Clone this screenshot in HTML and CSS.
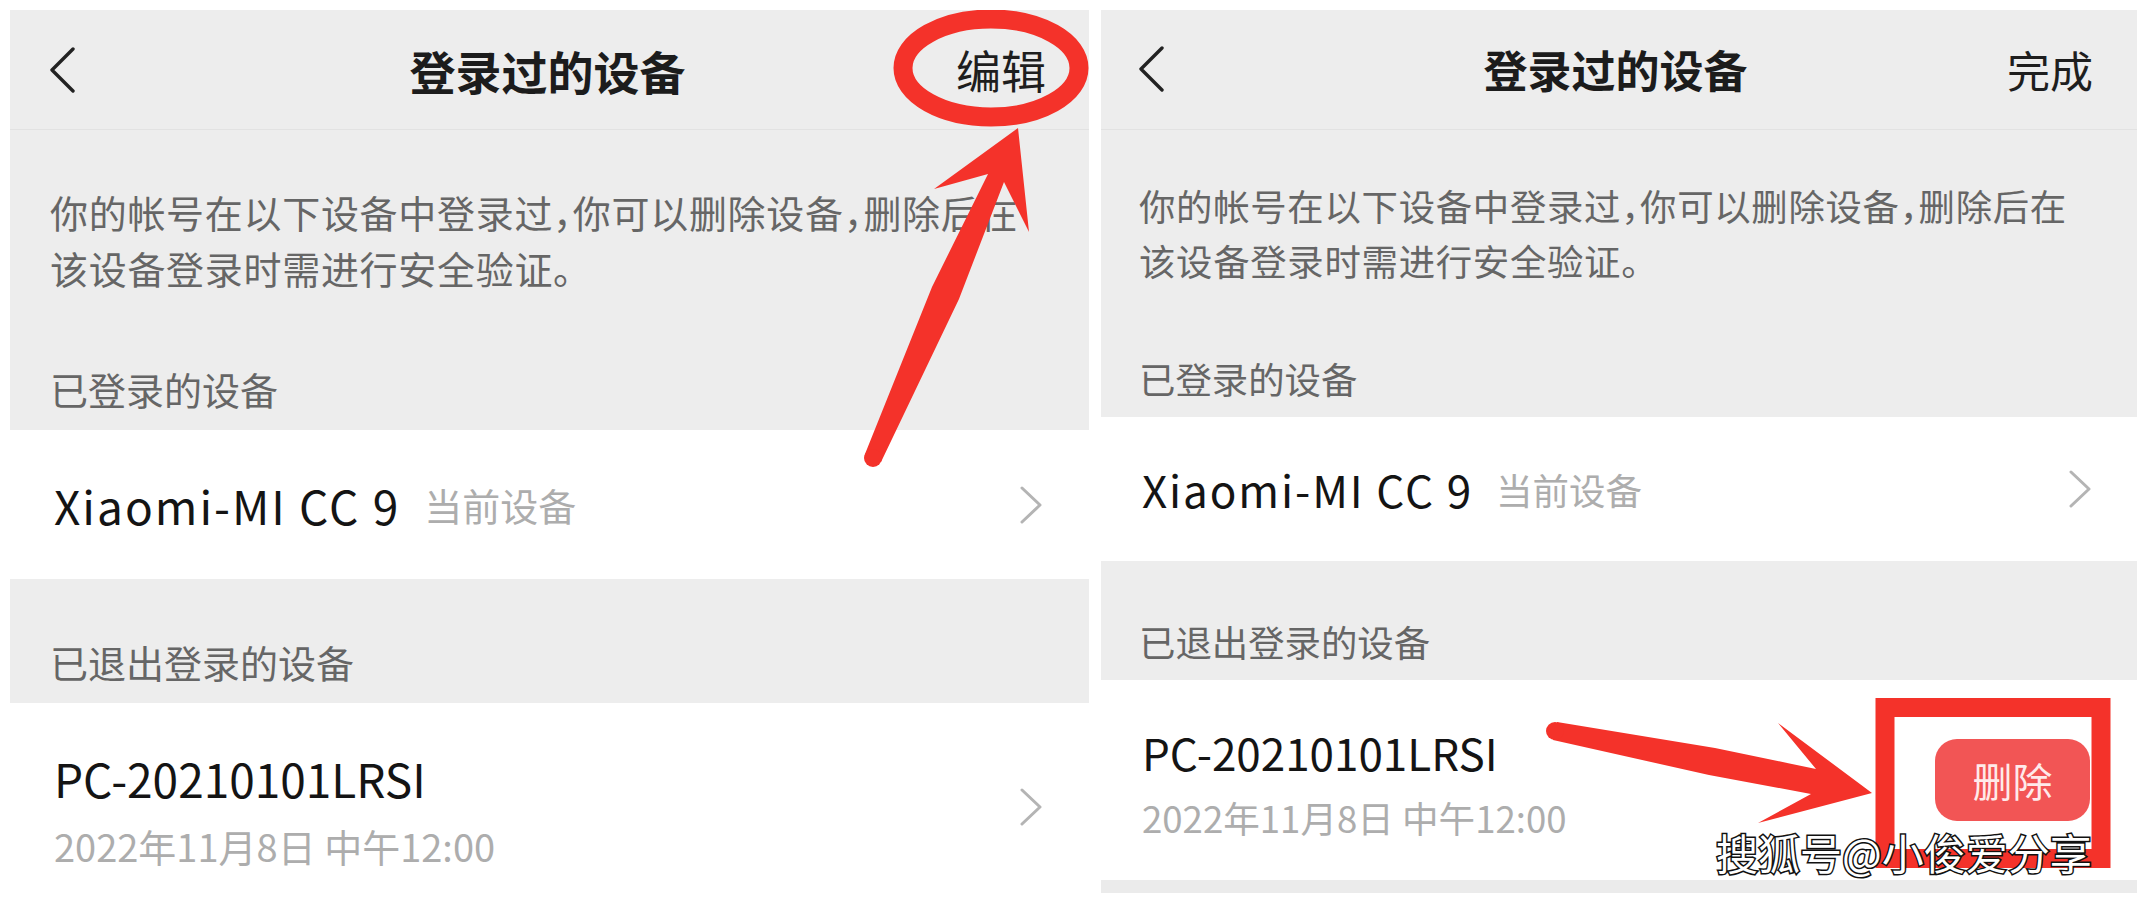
FILE: index.html
```html
<!DOCTYPE html>
<html lang="zh-CN">
<head>
<meta charset="utf-8">
<title>登录过的设备</title>
<link rel="stylesheet" href="styles.css">
</head>
<body>
<div class="page">
  <section class="phone phone-a">
    <header class="nav">
      <svg class="back" viewBox="0 0 26 48" width="26" height="48"><polyline points="24,3 3,24 24,45"/></svg>
      <h1 class="title">登录过的设备</h1>
      <span class="action">编辑</span>
    </header>
    <div class="intro"><p class="desc">你的帐号在以下设备中登录过，你可以删除设备，删除后在该设备登录时需进行安全验证。</p></div>
    <div class="group-title">已登录的设备</div>
    <div class="row row-current">
      <span class="name model">Xiaomi-MI CC 9</span><span class="tag">当前设备</span>
      <svg class="chev" viewBox="0 0 24 38" width="24" height="38"><polyline points="3,2 21,19 3,36"/></svg>
    </div>
    <div class="group-title">已退出登录的设备</div>
    <div class="row row-device">
      <div class="info"><div class="name">PC-20210101LRSI</div><div class="date">2022年11月8日 中午12:00</div></div>
      <svg class="chev" viewBox="0 0 24 38" width="24" height="38"><polyline points="3,2 21,19 3,36"/></svg>
    </div>
  </section>

  <section class="phone phone-b">
    <header class="nav">
      <svg class="back" viewBox="0 0 26 48" width="26" height="48"><polyline points="24,3 3,24 24,45"/></svg>
      <h1 class="title">登录过的设备</h1>
      <span class="action">完成</span>
    </header>
    <div class="intro"><p class="desc">你的帐号在以下设备中登录过，你可以删除设备，删除后在该设备登录时需进行安全验证。</p></div>
    <div class="group-title">已登录的设备</div>
    <div class="row row-current">
      <span class="name model">Xiaomi-MI CC 9</span><span class="tag">当前设备</span>
      <svg class="chev" viewBox="0 0 24 38" width="24" height="38"><polyline points="3,2 21,19 3,36"/></svg>
    </div>
    <div class="group-title">已退出登录的设备</div>
    <div class="row row-device">
      <div class="info"><div class="name">PC-20210101LRSI</div><div class="date">2022年11月8日 中午12:00</div></div>
      <button class="delete">删除</button>
    </div>
    <div class="bottom-strip"></div>
  </section>

  <svg class="marks" viewBox="0 0 2147 903" width="2147" height="903">
    <defs><clipPath id="panelTop"><rect x="0" y="10" width="2147" height="893"/></clipPath></defs>
    <ellipse cx="991" cy="68" rx="88" ry="49" fill="none" stroke="#f4322a" stroke-width="19" clip-path="url(#panelTop)"/>
    <polygon fill="#f4322a" points="865,454 932,287 988,174 934,189 1018,128 1029,232 1004,182 959,299 881,462"/>
    <circle cx="873" cy="458" r="9" fill="#f4322a"/>
    <polygon fill="#f4322a" points="1557,722 1715,748 1816,769 1778,723 1872,793 1758,823 1811,794 1709,775 1553,740"/>
    <circle cx="1555" cy="731" r="9" fill="#f4322a"/>
    <rect x="1885" y="707.5" width="216" height="151" fill="none" stroke="#f4322a" stroke-width="19"/>
  </svg>
  <div class="watermark">搜狐号@小俊爱分享</div>
</div>
</body>
</html>
```

FILE: styles.css
```css
* { box-sizing: border-box; }
html, body { margin: 0; padding: 0; background: #ffffff; }
body { font-family: "Noto Sans CJK SC", "Noto Sans", sans-serif; overflow: hidden; }

.page {
  position: relative;
  width: 2147px;
  height: 903px;
  display: flex;
  align-items: flex-start;
  gap: 12px;
  padding: 10px;
}

.phone {
  background: #ededed;
  display: flex;
  flex-direction: column;
}
.phone-a { width: 1079px; height: 878px; }
.phone-b { width: 1036px; height: 883px; }

/* nav bar */
.nav {
  height: 120px;
  display: grid;
  grid-template-columns: 1fr auto 1fr;
  align-items: center;
  border-bottom: 1px solid #e2e2e2;
}
.phone-a .nav { padding: 0 43px 0 39px; }
.phone-b .nav { padding: 0 44px 0 37px; }
.back { display: block; }
.back polyline { fill: none; stroke: #222; stroke-width: 3.4; stroke-linecap: round; stroke-linejoin: round; }
.title {
  margin: 0;
  font-weight: 700;
  color: #1c1c1c;
  line-height: 1;
}
.phone-a .title { font-size: 46px; }
.phone-b .title { font-size: 44px; }
.action { justify-self: end; color: #1e1e1e; line-height: 1; }
.phone-a .action { font-size: 45px; }
.phone-b .action { font-size: 43px; }

/* intro text */
.desc { margin: 0; color: #666; font-feature-settings: "halt" 1; }
.phone-a .intro { padding: 54px 60px 10px 40px; }
.phone-a .desc { font-size: 38px; line-height: 56px; letter-spacing: 0.7px; }
.phone-b .intro { padding: 48.5px 58px 10px 38px; }
.phone-b .desc { font-size: 36.4px; line-height: 55px; letter-spacing: 0.7px; }

/* group titles */
.group-title { color: #666; }
.phone-a .group-title { padding: 55px 40px 13px; font-size: 38px; line-height: 56px; }
.phone-b .group-title { padding: 53px 38px 11px; font-size: 36.4px; line-height: 55px; }

/* rows */
.row { background: #ffffff; display: flex; align-items: center; }
.row .name { color: #141414; }
.tag { color: #adadad; }
.date { color: #adadad; }
.chev { display: block; margin-left: auto; }
.chev polyline { fill: none; stroke: #b4b4b4; stroke-width: 3; stroke-linecap: round; stroke-linejoin: round; }

.phone-a .row-current { height: 149px; padding: 0 46px 0 44px; }
.phone-a .row .name { font-size: 46px; }
.phone-a .model { letter-spacing: 2px; }
.phone-a .tag { font-size: 38px; margin-left: 24px; }
.phone-a .row-device { height: 185px; padding: 0 46px 0 44px; align-items: flex-start; }
.phone-a .row-device .info { padding-top: 41px; }
.phone-a .row-device .name { line-height: 68px; }
.phone-a .date { font-size: 38px; line-height: 68px; }
.phone-a .row-device .chev { margin-top: 85px; }

.phone-b .row-current { height: 144px; padding: 0 45px 0 41px; }
.phone-b .row .name { font-size: 44px; }
.phone-b .model { letter-spacing: 1.9px; }
.phone-b .tag { font-size: 36.5px; margin-left: 23px; }
.phone-b .row-device { height: 200px; padding: 0 47px 0 41px; }
.phone-b .row-device .info { padding-top: 9px; }
.phone-b .row-device .name { line-height: 66px; }
.phone-b .date { font-size: 36.6px; line-height: 66px; }

.delete {
  margin-left: auto;
  width: 155px;
  height: 82px;
  border: 0;
  border-radius: 22px;
  background: #f25555;
  color: #ffeaea;
  font-family: inherit;
  font-size: 40px;
  line-height: 1;
  padding: 0;
}

.bottom-strip { height: 13px; background: #ebebeb; }

/* annotation overlay */
.marks { position: absolute; left: 0; top: 0; pointer-events: none; }

.watermark {
  position: absolute;
  left: 1716px;
  top: 831px;
  font-size: 42px;
  line-height: 1;
  color: #ffffff;
  -webkit-text-stroke: 3px #111;
  paint-order: stroke fill;
  white-space: nowrap;
}
```
